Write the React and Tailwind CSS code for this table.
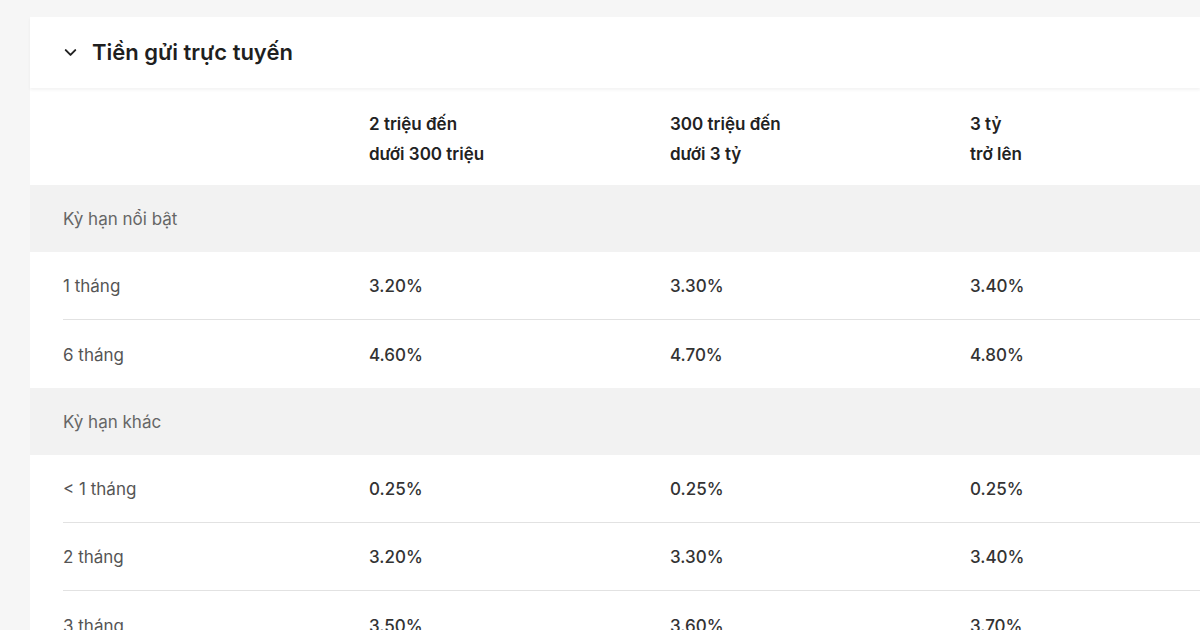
import { ChevronDown } from "lucide-react";

const sections = [
  {
    title: "Kỳ hạn nổi bật",
    rows: [
      { term: "1 tháng", rates: ["3.20%", "3.30%", "3.40%"] },
      { term: "6 tháng", rates: ["4.60%", "4.70%", "4.80%"] },
    ],
  },
  {
    title: "Kỳ hạn khác",
    rows: [
      { term: "< 1 tháng", rates: ["0.25%", "0.25%", "0.25%"] },
      { term: "2 tháng", rates: ["3.20%", "3.30%", "3.40%"] },
      { term: "3 tháng", rates: ["3.50%", "3.60%", "3.70%"] },
    ],
  },
];

function App() {
  return (
    <div className="h-[630px] overflow-hidden bg-[#f6f6f6] pt-[17px] pl-[30px] font-['Inter',sans-serif]">
      <div className="bg-white">
        <div className="flex h-[71px] items-center gap-[12px] pl-[31px] shadow-[0_2px_3px_rgba(0,0,0,0.05)]">
          <ChevronDown size={19} strokeWidth={2.5} className="text-[#222]" />
          <h2 className="text-[22px] font-semibold text-[#1f1f1f]">Tiền gửi trực tuyến</h2>
        </div>

        <div className="grid h-[97px] grid-cols-[339px_301px_300px_1fr] items-center pt-[4px] text-[17px] font-semibold leading-[30px] text-[#222]">
          <div />
          <div>2 triệu đến<br />dưới 300 triệu</div>
          <div>300 triệu đến<br />dưới 3 tỷ</div>
          <div>3 tỷ<br />trở lên</div>
        </div>

        {sections.map((section) => (
          <div key={section.title}>
            <div className="flex h-[67px] items-center bg-[#f2f2f2] pl-[33px] pt-[2px] text-[17px] text-[#666]">
              {section.title}
            </div>
            <div className="pl-[33px]">
              {section.rows.map((row, i) => (
                <div
                  key={row.term}
                  className={`grid h-[68px] grid-cols-[306px_301px_300px_1fr] items-center pt-[3px] text-[17px] ${i < section.rows.length - 1 ? "border-b border-[#e2e2e2]" : ""}`}
                >
                  <div className="text-[#555]">{row.term}</div>
                  {row.rates.map((r, j) => (
                    <div key={j} className="font-medium text-[#333]">{r}</div>
                  ))}
                </div>
              ))}
            </div>
          </div>
        ))}
      </div>
    </div>
  );
}

export default App;
